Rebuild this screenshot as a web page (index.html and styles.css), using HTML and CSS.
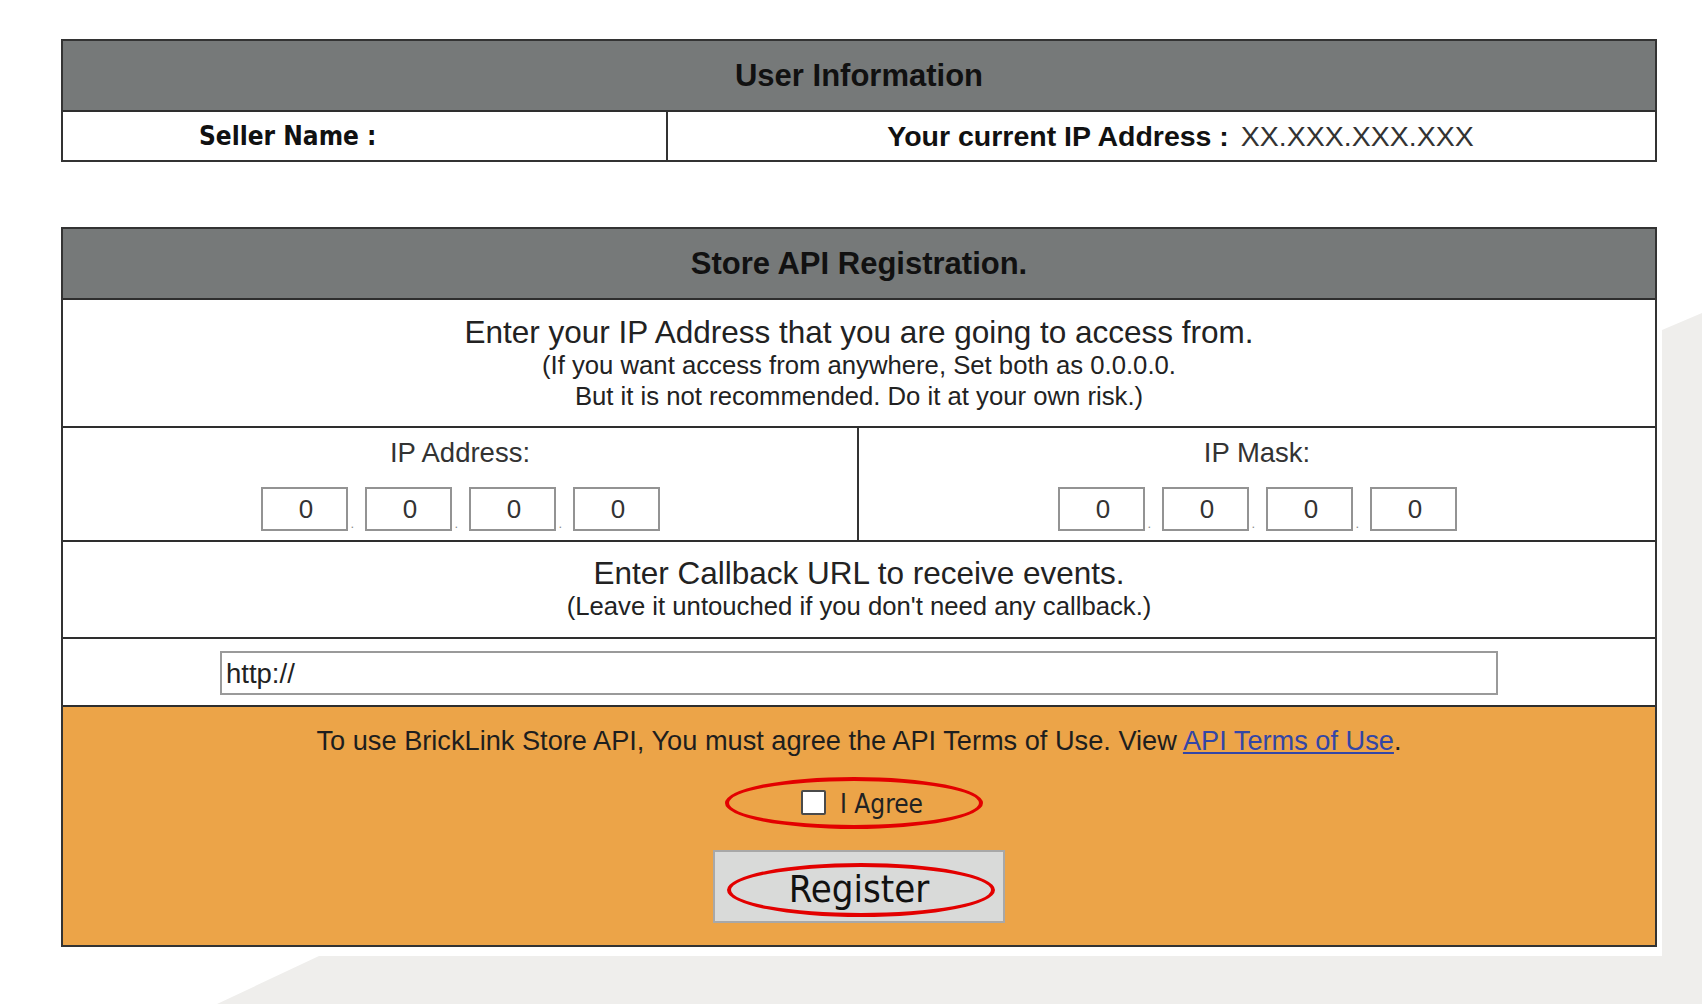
FILE: index.html
```html
<!DOCTYPE html>
<html lang="en">
<head>
<meta charset="utf-8">
<title>Store API Registration</title>
<link rel="stylesheet" href="styles.css">
</head>
<body>
<svg class="backdrop" width="1702" height="1004" viewBox="0 0 1702 1004" aria-hidden="true">
  <polygon points="1662,330 1702,313 1702,1004 217,1004 319,956 1662,956" fill="#efeeec"/>
</svg>
<main class="sheet">
  <section class="panel">
    <div class="panel-head">User Information</div>
    <div class="user-row">
      <div class="user-cell seller">Seller Name :</div>
      <div class="user-cell ip-now"><span class="ip-label-b">Your current IP Address :</span><span class="ip-val">XX.XXX.XXX.XXX</span></div>
    </div>
  </section>

  <section class="panel reg">
    <div class="panel-head">Store API Registration.</div>
    <div class="note-row">
      <p class="lead">Enter your IP Address that you are going to access from.</p>
      <p class="sub">(If you want access from anywhere, Set both as 0.0.0.0.</p>
      <p class="sub">But it is not recommended. Do it at your own risk.)</p>
    </div>
    <div class="ip-row">
      <div class="ip-cell first">
        <div class="ip-label">IP Address:</div>
        <div class="octets">
          <input class="octet" type="text" value="0"><span class="dot">.</span><input class="octet" type="text" value="0"><span class="dot">.</span><input class="octet" type="text" value="0"><span class="dot">.</span><input class="octet" type="text" value="0">
        </div>
      </div>
      <div class="ip-cell">
        <div class="ip-label">IP Mask:</div>
        <div class="octets">
          <input class="octet" type="text" value="0"><span class="dot">.</span><input class="octet" type="text" value="0"><span class="dot">.</span><input class="octet" type="text" value="0"><span class="dot">.</span><input class="octet" type="text" value="0">
        </div>
      </div>
    </div>
    <div class="note-row callback">
      <p class="lead">Enter Callback URL to receive events.</p>
      <p class="sub">(Leave it untouched if you don't need any callback.)</p>
    </div>
    <div class="url-row">
      <input class="url" type="text" value="http://">
    </div>
    <div class="terms">
      <p class="terms-text">To use BrickLink Store API, You must agree the API Terms of Use. View <a href="#">API Terms of Use</a>.</p>
      <div class="agree">
        <label class="agree-label"><input class="check" type="checkbox"><span>I Agree</span></label>
        <span class="ring ring-agree"></span>
      </div>
      <div class="submit">
        <button class="register" type="button">Register</button>
        <span class="ring ring-register"></span>
      </div>
    </div>
  </section>
</main>
</body>
</html>
```

FILE: styles.css
```css
* { box-sizing: border-box; }

html, body {
  margin: 0;
  padding: 0;
}

body {
  width: 1702px;
  height: 1004px;
  overflow: hidden;
  position: relative;
  background: #ffffff;
  font-family: "Liberation Sans", Arial, sans-serif;
  color: #222;
}

.backdrop {
  position: absolute;
  left: 0;
  top: 0;
  z-index: 0;
}

.sheet {
  position: relative;
  z-index: 1;
  width: 1596px;
  margin-left: 61px;
  padding-top: 39px;
}

.panel {
  border: 2px solid #333;
  background: #fff;
}

.panel.reg {
  margin-top: 65px;
}

.panel-head {
  height: 71px;
  background: #767979;
  border-bottom: 2px solid #2e2e2e;
  display: flex;
  align-items: center;
  justify-content: center;
  font-weight: bold;
  font-size: 31px;
  color: #111;
}

.user-row {
  display: grid;
  grid-template-columns: 605px 1fr;
  height: 48px;
}

.user-cell {
  display: flex;
  align-items: center;
}

.seller {
  border-right: 2px solid #333;
  padding-left: 136px;
  font-family: "DejaVu Sans Condensed", "DejaVu Sans", sans-serif;
  font-stretch: condensed;
  font-weight: bold;
  font-size: 26px;
  color: #111;
}

.ip-now {
  justify-content: center;
  padding-left: 38px;
  font-size: 28.5px;
  white-space: nowrap;
}

.ip-label-b {
  font-weight: bold;
  color: #111;
}

.ip-val {
  margin-left: 12px;
  color: #333;
}

.note-row {
  height: 128px;
  border-bottom: 2px solid #2e2e2e;
  padding-top: 14px;
  text-align: center;
}

.note-row.callback {
  height: 97px;
  padding-top: 13px;
}

.note-row p {
  margin: 0;
}

.lead {
  font-size: 31.5px;
  line-height: 36px;
  color: #222;
}

.sub {
  font-size: 25.7px;
  line-height: 31px;
  color: #222;
}

.ip-row {
  display: grid;
  grid-template-columns: 1fr 1fr;
  height: 114px;
  border-bottom: 2px solid #2e2e2e;
}

.ip-cell {
  padding-top: 9px;
  text-align: center;
}

.ip-cell.first {
  border-right: 2px solid #333;
}

.ip-label {
  font-size: 27.5px;
  line-height: 32px;
  color: #333;
}

.octets {
  margin-top: 18px;
  display: flex;
  justify-content: center;
  align-items: flex-end;
}

.octet {
  width: 87px;
  height: 44px;
  margin: 0;
  padding: 0 0 0 4px;
  border: 2px solid #939393;
  background: #fff;
  text-align: center;
  font-family: "Liberation Sans", Arial, sans-serif;
  font-size: 26px;
  color: #333;
  outline: none;
}

.dot {
  width: 17px;
  padding-left: 3px;
  text-align: left;
  font-size: 13px;
  line-height: 14px;
  color: #8a8a8a;
}

.url-row {
  height: 68px;
  border-bottom: 2px solid #2e2e2e;
  padding-top: 12px;
  display: flex;
  justify-content: center;
  align-items: flex-start;
}

.url {
  width: 1278px;
  height: 44px;
  margin: 0;
  border: 2px solid #9a9a9a;
  padding: 2px 4px 0;
  font-family: "Liberation Sans", Arial, sans-serif;
  font-size: 27.5px;
  color: #222;
  outline: none;
}

.terms {
  height: 238px;
  background: #eca448;
  padding-top: 18px;
  text-align: center;
}

.terms-text {
  margin: 0;
  font-size: 27.2px;
  line-height: 32px;
  color: #1e1e1e;
}

.terms-text a {
  color: #3346a6;
  text-decoration: underline;
}

.agree {
  position: relative;
  margin-top: 25px;
  height: 40px;
  display: flex;
  justify-content: center;
  align-items: center;
}

.agree-label {
  display: flex;
  align-items: center;
  margin-left: 6px;
  font-family: "DejaVu Sans Condensed", "DejaVu Sans", sans-serif;
  font-stretch: condensed;
  font-size: 26px;
  color: #222;
}

.check {
  appearance: none;
  -webkit-appearance: none;
  width: 25px;
  height: 25px;
  margin: 0 14px 0 0;
  border: 2px solid #4a4a4a;
  border-radius: 2px;
  background: #fff;
}

.agree-label span {
  position: relative;
  top: 2px;
}

.submit {
  position: relative;
  margin-top: 28px;
  display: flex;
  justify-content: center;
}

.register {
  width: 292px;
  height: 73px;
  margin: 0;
  padding: 5px 0 0;
  background: #d9dad9;
  border: 2px solid #a8a8a8;
  border-radius: 0;
  font-family: "DejaVu Sans Condensed", "DejaVu Sans", sans-serif;
  font-stretch: condensed;
  font-size: 38px;
  color: #111;
}

.ring {
  position: absolute;
  left: 50%;
  border: 4px solid #e30000;
  border-radius: 50%;
  pointer-events: none;
}

.ring-agree {
  top: -5px;
  width: 258px;
  height: 52px;
  margin-left: -134px;
}

.ring-register {
  top: 13px;
  width: 268px;
  height: 54px;
  margin-left: -132px;
}
```
